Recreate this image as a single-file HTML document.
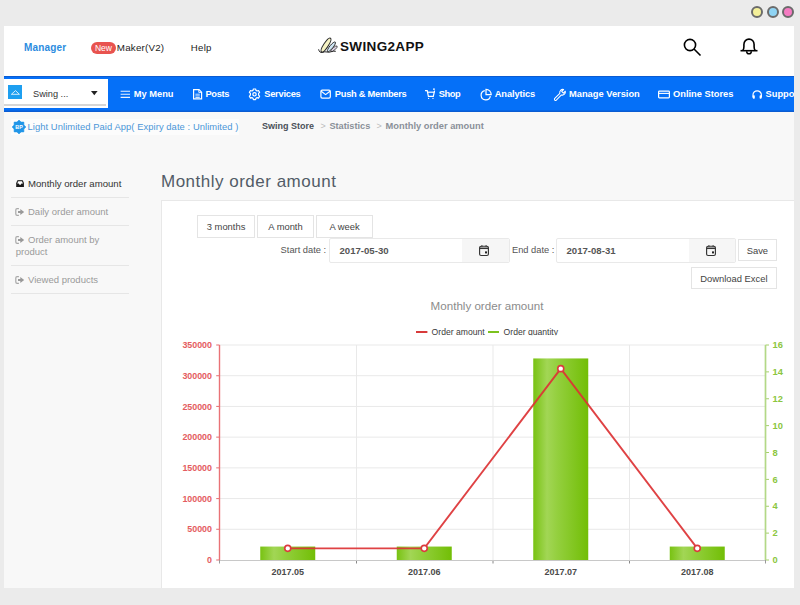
<!DOCTYPE html>
<html><head><meta charset="utf-8">
<style>
*{box-sizing:border-box;margin:0;padding:0}
html,body{width:800px;height:605px;overflow:hidden;background:#ebebeb;font-family:"Liberation Sans",sans-serif}
.a{position:absolute;white-space:nowrap;line-height:1}
.dot{position:absolute;width:12px;height:12px;border-radius:50%;border:2px solid #6b6b6b;top:5.7px}
#win{position:absolute;left:4px;top:26px;width:790px;height:562px;background:#fff;overflow:hidden}
#content{position:absolute;left:4px;top:112px;width:790px;height:476px;background:#f8f8f8}
#nav{position:absolute;left:4px;top:76.3px;width:790px;height:35.4px;background:#0570f8;overflow:hidden;box-shadow:inset 0 1px 0 #0b5cd2,inset 0 -1.5px 0 #0b5cd2}
.nt{position:absolute;top:14.2px;color:#fff;font-weight:bold;font-size:9.3px;line-height:1;white-space:nowrap}
.sep{position:absolute;left:11px;width:118px;height:1px;background:#e6e6e6}
.btn{position:absolute;background:#fff;border:1px solid #e4e4e4;font-size:9.4px;color:#444;text-align:center;line-height:22.5px}
.inp{position:absolute;background:#fff;border:1px solid #e9e9e9}
</style></head><body>
<div class="dot" style="left:751px;background:#f4f09a"></div>
<div class="dot" style="left:766.6px;background:#8fd4f4"></div>
<div class="dot" style="left:782px;background:#f57bc2"></div>
<div id="win"></div>
<div class="a" style="left:24.00px;top:43.00px;font-size:10px;color:#2b8ce0;font-weight:bold;letter-spacing:0.15px;">Manager</div>
<div class="a" style="left:91px;top:41.5px;width:25px;height:12.5px;border-radius:6.5px;background:#e8534f;color:#fff;font-size:8.5px;line-height:12.5px;text-align:center">New</div>
<div class="a" style="left:116.80px;top:43.00px;font-size:9.8px;color:#222;letter-spacing:0.2px;">Maker(V2)</div>
<div class="a" style="left:190.80px;top:43.00px;font-size:9.6px;color:#222;letter-spacing:0.3px;">Help</div>
<svg class="a" style="left:314px;top:34px" width="30" height="22" viewBox="314 34 30 22">
 <ellipse cx="326" cy="45.1" rx="8.2" ry="2.3" transform="rotate(-57 326 45.1)" fill="#f6f3c4" stroke="#2a2a2a" stroke-width="1"/>
 <ellipse cx="331.4" cy="46.8" rx="6.1" ry="1.7" transform="rotate(-51 331.4 46.8)" fill="#cfe6f6" stroke="#2a2a2a" stroke-width="0.9"/>
 <ellipse cx="334" cy="48.8" rx="4.1" ry="1.3" transform="rotate(-41 334 48.8)" fill="#ddd3e6" stroke="#3a3a3a" stroke-width="0.8"/>
 <path d="M318.6 49.3 Q319.4 53 322.2 52.4 Q325 51.4 327 52 Q329.2 52.6 331.2 51.7 Q333.5 50.9 335.8 51.3" fill="none" stroke="#2a2a2a" stroke-width="1"/>
</svg>
<div class="a" style="left:340.00px;top:40.00px;font-size:13.5px;color:#111;font-weight:bold;letter-spacing:0.35px;">SWING2APP</div>
<svg class="a" style="left:680px;top:35px" width="24" height="24" viewBox="0 0 24 24">
 <circle cx="10" cy="10" r="5.6" fill="none" stroke="#000" stroke-width="1.6"/>
 <line x1="14" y1="14" x2="20.5" y2="20.5" stroke="#000" stroke-width="1.6"/>
</svg>
<svg class="a" style="left:737px;top:35px" width="24" height="24" viewBox="0 0 24 24">
 <path d="M5.8 15.6 C6.6 14.6 6.9 13.5 6.9 11.8 V9.6 C6.9 6.3 9.2 4.1 12 4.1 C14.8 4.1 17.1 6.3 17.1 9.6 V11.8 C17.1 13.5 17.4 14.6 18.2 15.6" fill="none" stroke="#000" stroke-width="1.6"/>
 <line x1="3.5" y1="15.7" x2="20.5" y2="15.7" stroke="#000" stroke-width="1.6"/>
 <path d="M9.7 16.2 A2.3 2.6 0 0 0 14.3 16.2" fill="none" stroke="#000" stroke-width="1.5"/>
</svg>
<div id="nav">
 <div style="position:absolute;left:0;top:2.9px;width:103.5px;height:28.8px;background:#fff"></div>
 <div style="position:absolute;left:0;top:28.1px;width:101.7px;height:2.1px;background:#d6d6d6"></div>
 <div style="position:absolute;left:4px;top:9px;width:14px;height:14px;background:#1e9ff0"></div>
 <svg style="position:absolute;left:4px;top:9px" width="14" height="14" viewBox="0 0 14 14"><path d="M3.4 9.3 L7.5 5.6 L11.4 9.3 Z" fill="none" stroke="#fff" stroke-width="0.8"/></svg>
 <svg style="position:absolute;left:0;top:0" width="790" height="36" viewBox="4 76 790 36" fill="none" stroke="#fff" stroke-width="1.2">
  <path d="M120.6 91.2 H130 M120.6 94.3 H130 M120.6 97.4 H130" stroke-width="1.1" stroke="#eaf2ff"/>
  <path d="M193.6 89.6 H199 L201.6 92.2 V98.9 H193.6 Z" />
  <path d="M198.8 89.6 V92.4 H201.6" stroke-width="0.9"/>
  <path d="M195.4 94.2 H199.8 M195.4 95.9 H199.8 M195.4 97.5 H199.8" stroke-width="0.8"/>
  <g transform="translate(254.5 94.3)">
   <path d="M-1.1 -5.3 L1.1 -5.3 L1.5 -3.9 L2.6 -3.3 L4 -3.8 L5.1 -1.9 L4.1 -0.9 L4.1 0.9 L5.1 1.9 L4 3.8 L2.6 3.3 L1.5 3.9 L1.1 5.3 L-1.1 5.3 L-1.5 3.9 L-2.6 3.3 L-4 3.8 L-5.1 1.9 L-4.1 0.9 L-4.1 -0.9 L-5.1 -1.9 L-4 -3.8 L-2.6 -3.3 L-1.5 -3.9 Z" stroke-linejoin="round"/>
   <circle r="1.7"/>
  </g>
  <rect x="320.9" y="90.2" width="9.4" height="7.9" rx="1.3"/>
  <path d="M321.2 91.2 L325.6 94.6 L330 91.2"/>
  <path d="M425 90.6 H427.2 L428.4 96.3 H433.3 L434.6 90.6 M433 89.2 L434.9 89.2" />
  <path d="M427.4 92.2 H434.2"/>
  <circle cx="428.6" cy="98.4" r="0.6" fill="#fff" stroke="none"/>
  <circle cx="433" cy="98.4" r="0.6" fill="#fff" stroke="none"/>
  <path d="M484.8 90.6 A4.7 4.7 0 1 0 490.4 96.2" />
  <path d="M486 89.3 V94.6 H491.2 A5.2 5.2 0 0 0 486 89.3 Z" fill="none"/>
  <g transform="translate(560.2 94.6) rotate(45)"><path d="M-1.1 6.6 V-0.6 A3.1 3.1 0 0 1 -1.2 -6 V-3.3 H1.2 V-6 A3.1 3.1 0 0 1 1.1 -0.6 V6.6 A1.1 1.1 0 0 1 -1.1 6.6 Z" stroke-width="1.05" stroke-linejoin="round"/></g>
  <rect x="658.6" y="91.2" width="10.8" height="6.6" rx="0.8"/>
  <path d="M658.6 93.4 H669.4" stroke-width="1.1"/>
  <path d="M753 97.5 V95 A4.2 4.2 0 0 1 761.4 95 V97.5" />
  <rect x="752.8" y="95.2" width="2" height="3.6" rx="0.8" fill="#fff" stroke="none"/>
  <rect x="759.6" y="95.2" width="2" height="3.6" rx="0.8" fill="#fff" stroke="none"/>
 </svg>
 <div class="nt" style="left:129.75px;letter-spacing:0px">My Menu</div>
 <div class="nt" style="left:201.50px;letter-spacing:-0.35px">Posts</div>
 <div class="nt" style="left:260.25px;letter-spacing:-0.25px">Services</div>
 <div class="nt" style="left:330.80px;letter-spacing:-0.27px">Push &amp; Members</div>
 <div class="nt" style="left:434.80px;letter-spacing:-0.45px">Shop</div>
 <div class="nt" style="left:490.75px;letter-spacing:-0.1px">Analytics</div>
 <div class="nt" style="left:565.00px;letter-spacing:0px">Manage Version</div>
 <div class="nt" style="left:669.00px;letter-spacing:0px">Online Stores</div>
 <div class="nt" style="left:761.50px;letter-spacing:0px">Support</div>
 <div class="nt" style="left:29px;top:14px;color:#333;font-weight:normal;font-size:9.2px">Swing ...</div>
 <svg style="position:absolute;left:87.2px;top:15px" width="7" height="5" viewBox="0 0 7 5"><path d="M0 0 H6.6 L3.3 4.3 Z" fill="#222"/></svg>
</div>
<div id="content"></div>
<div class="a" style="left:11px;top:118.5px;width:228px;height:16px;background:#fcfcfc"></div>
<svg class="a" style="left:11px;top:119px" width="16" height="16" viewBox="0 0 16 16"><path d="M8.00 1.10 L10.03 3.10 L12.88 3.12 L12.90 5.97 L14.90 8.00 L12.90 10.03 L12.88 12.88 L10.03 12.90 L8.00 14.90 L5.97 12.90 L3.12 12.88 L3.10 10.03 L1.10 8.00 L3.10 5.97 L3.12 3.12 L5.97 3.10 Z" fill="#2196e8" stroke="#2196e8" stroke-width="0.6" stroke-linejoin="round"/><text x="8" y="10.2" font-family="Liberation Sans" font-size="5.4" font-weight="bold" fill="#fff" text-anchor="middle">BP</text></svg>
<div class="a" style="left:27.50px;top:122.00px;font-size:9.4px;color:#4b96d8;letter-spacing:0.07px;">Light Unlimited Paid App( Expiry date : Unlimited )</div>
<div class="a" style="left:262.00px;top:122.00px;font-size:9px;color:#4a5058;font-weight:bold;">Swing Store</div>
<div class="a" style="left:320.50px;top:122.00px;font-size:9px;color:#bbbbbb;">&gt;</div>
<div class="a" style="left:329.40px;top:122.00px;font-size:9.2px;color:#8a9099;font-weight:bold;">Statistics</div>
<div class="a" style="left:376.50px;top:122.00px;font-size:9px;color:#bbbbbb;">&gt;</div>
<div class="a" style="left:385.60px;top:122.00px;font-size:9.3px;color:#8a9099;font-weight:bold;">Monthly order amount</div>
<svg class="a" style="left:15.6px;top:180px" width="8.2" height="7.2" viewBox="0 0 8.2 7.2"><path d="M0.3 6.9 V3.3 L1.7 0.3 H6.5 L7.9 3.3 V6.9 Z" fill="#1a1a1a" stroke="#1a1a1a" stroke-width="0.4" stroke-linejoin="round"/><path d="M1.2 3.6 L2.3 1.2 H5.9 L7 3.6 H5.5 L4.7 4.8 H3.5 L2.7 3.6 Z" fill="#fff"/></svg>
<div class="a" style="left:28.00px;top:179.00px;font-size:9.6px;color:#333;">Monthly order amount</div>
<div class="sep" style="top:197px"></div>
<svg class="a" style="left:15px;top:207.5px" width="10" height="8" viewBox="0 0 10 8"><path d="M3.9 0.7 H2.1 Q0.8 0.7 0.8 2 V6 Q0.8 7.3 2.1 7.3 H3.9" fill="none" stroke="#a8a8a8" stroke-width="1.2"/><path d="M3 3 H5.3 V1 L9.2 4 L5.3 7 V5 H3 Z" fill="#999"/></svg>
<div class="a" style="left:28.00px;top:207.00px;font-size:9.5px;color:#9a9a9a;">Daily order amount</div>
<div class="sep" style="top:225px"></div>
<svg class="a" style="left:15px;top:235.5px" width="10" height="8" viewBox="0 0 10 8"><path d="M3.9 0.7 H2.1 Q0.8 0.7 0.8 2 V6 Q0.8 7.3 2.1 7.3 H3.9" fill="none" stroke="#a8a8a8" stroke-width="1.2"/><path d="M3 3 H5.3 V1 L9.2 4 L5.3 7 V5 H3 Z" fill="#999"/></svg>
<div class="a" style="left:28.00px;top:235.00px;font-size:9.5px;color:#9a9a9a;">Order amount by</div>
<div class="a" style="left:15.70px;top:247.00px;font-size:9.5px;color:#9a9a9a;">product</div>
<div class="sep" style="top:265px"></div>
<svg class="a" style="left:15px;top:275.5px" width="10" height="8" viewBox="0 0 10 8"><path d="M3.9 0.7 H2.1 Q0.8 0.7 0.8 2 V6 Q0.8 7.3 2.1 7.3 H3.9" fill="none" stroke="#a8a8a8" stroke-width="1.2"/><path d="M3 3 H5.3 V1 L9.2 4 L5.3 7 V5 H3 Z" fill="#999"/></svg>
<div class="a" style="left:28.00px;top:275.00px;font-size:9.5px;color:#9a9a9a;">Viewed products</div>
<div class="sep" style="top:293px"></div>
<div class="a" style="left:161.00px;top:173.00px;font-size:17px;color:#525c67;letter-spacing:0.5px;">Monthly order amount</div>
<div class="a" style="left:161px;top:200px;width:633px;height:388px;background:#fff;border:1px solid #e8e8e8;border-right:none;border-bottom:none"></div>
<div class="btn" style="left:197.3px;top:215px;width:57.5px;height:22.5px">3 months</div>
<div class="btn" style="left:257.0px;top:215px;width:57.0px;height:22.5px">A month</div>
<div class="btn" style="left:316.0px;top:215px;width:57.0px;height:22.5px">A week</div>
<div class="a" style="left:280.60px;top:246.00px;font-size:9.3px;color:#555;">Start date :</div>
<div class="a" style="left:512.00px;top:246.00px;font-size:9.3px;color:#555;">End date :</div>
<div class="inp" style="left:329px;top:238px;width:180.5px;height:24.6px;border-radius:2px"></div>
<div class="a" style="left:461.5px;top:239px;width:47.0px;height:22.6px;background:#f6f6f6;border-radius:0 2px 2px 0"></div>
<svg class="a" style="left:478.2px;top:244px" width="12" height="13" viewBox="0 0 12 13"><rect x="1.6" y="2.2" width="8.8" height="9.3" rx="1.5" fill="none" stroke="#333" stroke-width="1.15"/><path d="M1.6 4.3 H10.4" stroke="#333" stroke-width="1.5"/><rect x="7" y="7.4" width="2" height="2" fill="#222"/><path d="M3.9 1.2 V2.8 M8.1 1.2 V2.8" stroke="#333" stroke-width="1.1"/></svg>
<div class="a" style="left:339.50px;top:246.00px;font-size:9.6px;color:#555;font-weight:bold;">2017-05-30</div>
<div class="inp" style="left:556px;top:238px;width:180.0px;height:24.6px;border-radius:2px"></div>
<div class="a" style="left:688.8px;top:239px;width:46.2px;height:22.6px;background:#f6f6f6;border-radius:0 2px 2px 0"></div>
<svg class="a" style="left:705.1px;top:244px" width="12" height="13" viewBox="0 0 12 13"><rect x="1.6" y="2.2" width="8.8" height="9.3" rx="1.5" fill="none" stroke="#333" stroke-width="1.15"/><path d="M1.6 4.3 H10.4" stroke="#333" stroke-width="1.5"/><rect x="7" y="7.4" width="2" height="2" fill="#222"/><path d="M3.9 1.2 V2.8 M8.1 1.2 V2.8" stroke="#333" stroke-width="1.1"/></svg>
<div class="a" style="left:566.50px;top:246.00px;font-size:9.6px;color:#555;font-weight:bold;">2017-08-31</div>
<div class="btn" style="left:738.2px;top:239px;width:38.4px;height:22.2px;line-height:21.5px">Save</div>
<div class="btn" style="left:691.2px;top:266.5px;width:85.4px;height:22.2px;line-height:21px">Download Excel</div>
<svg class="a" style="left:0;top:0" width="794" height="588" viewBox="0 0 794 588">
 <defs><linearGradient id="bg" x1="0" x2="1" y1="0" y2="0"><stop offset="0" stop-color="#78c212"/><stop offset="0.25" stop-color="#a2d655"/><stop offset="0.45" stop-color="#93cf3d"/><stop offset="1" stop-color="#72be06"/></linearGradient>
  <clipPath id="lg"><rect x="400" y="320" width="200" height="15.2"/></clipPath></defs>
 <text x="487" y="310" font-family="Liberation Sans" font-size="11.6" fill="#8c8c8c" text-anchor="middle">Monthly order amount</text>
 <g clip-path="url(#lg)">
  <path d="M416 332 H427.4" stroke="#d83a3a" stroke-width="2"/>
  <text x="431.6" y="335" font-family="Liberation Sans" font-size="8.6" fill="#3a3a3a">Order amount</text>
  <path d="M488 332 H499" stroke="#7cc21e" stroke-width="2"/>
  <text x="503.6" y="335" font-family="Liberation Sans" font-size="8.6" fill="#3a3a3a">Order quantity</text>
 </g>
 <path d="M219.5 345.00 H765.5" stroke="#e9e9e9" stroke-width="1"/>
 <path d="M216.2 345.00 H219.5" stroke="#e87a7e" stroke-width="1.1"/>
 <text x="212" y="348.20" font-family="Liberation Sans" font-size="8.9" font-weight="bold" fill="#e45c61" text-anchor="end">350000</text>
 <path d="M219.5 375.71 H765.5" stroke="#e9e9e9" stroke-width="1"/>
 <path d="M216.2 375.71 H219.5" stroke="#e87a7e" stroke-width="1.1"/>
 <text x="212" y="378.91" font-family="Liberation Sans" font-size="8.9" font-weight="bold" fill="#e45c61" text-anchor="end">300000</text>
 <path d="M219.5 406.43 H765.5" stroke="#e9e9e9" stroke-width="1"/>
 <path d="M216.2 406.43 H219.5" stroke="#e87a7e" stroke-width="1.1"/>
 <text x="212" y="409.63" font-family="Liberation Sans" font-size="8.9" font-weight="bold" fill="#e45c61" text-anchor="end">250000</text>
 <path d="M219.5 437.14 H765.5" stroke="#e9e9e9" stroke-width="1"/>
 <path d="M216.2 437.14 H219.5" stroke="#e87a7e" stroke-width="1.1"/>
 <text x="212" y="440.34" font-family="Liberation Sans" font-size="8.9" font-weight="bold" fill="#e45c61" text-anchor="end">200000</text>
 <path d="M219.5 467.86 H765.5" stroke="#e9e9e9" stroke-width="1"/>
 <path d="M216.2 467.86 H219.5" stroke="#e87a7e" stroke-width="1.1"/>
 <text x="212" y="471.06" font-family="Liberation Sans" font-size="8.9" font-weight="bold" fill="#e45c61" text-anchor="end">150000</text>
 <path d="M219.5 498.57 H765.5" stroke="#e9e9e9" stroke-width="1"/>
 <path d="M216.2 498.57 H219.5" stroke="#e87a7e" stroke-width="1.1"/>
 <text x="212" y="501.77" font-family="Liberation Sans" font-size="8.9" font-weight="bold" fill="#e45c61" text-anchor="end">100000</text>
 <path d="M219.5 529.29 H765.5" stroke="#e9e9e9" stroke-width="1"/>
 <path d="M216.2 529.29 H219.5" stroke="#e87a7e" stroke-width="1.1"/>
 <text x="212" y="532.49" font-family="Liberation Sans" font-size="8.9" font-weight="bold" fill="#e45c61" text-anchor="end">50000</text>
 <path d="M216.2 560.00 H219.5" stroke="#e87a7e" stroke-width="1.1"/>
 <text x="212" y="563.20" font-family="Liberation Sans" font-size="8.9" font-weight="bold" fill="#e45c61" text-anchor="end">0</text>
 <path d="M356.50 345.0 V560.0" stroke="#e9e9e9" stroke-width="1"/>
 <path d="M356.50 560.0 V563.5" stroke="#888" stroke-width="1"/>
 <path d="M493.00 345.0 V560.0" stroke="#e9e9e9" stroke-width="1"/>
 <path d="M493.00 560.0 V563.5" stroke="#888" stroke-width="1"/>
 <path d="M629.50 345.0 V560.0" stroke="#e9e9e9" stroke-width="1"/>
 <path d="M629.50 560.0 V563.5" stroke="#888" stroke-width="1"/>
 <path d="M765.5 560.00 H769" stroke="#a5d06a" stroke-width="1"/>
 <text x="772.5" y="563.20" font-family="Liberation Sans" font-size="9.3" font-weight="bold" fill="#8cc640">0</text>
 <path d="M765.5 533.12 H769" stroke="#a5d06a" stroke-width="1"/>
 <text x="772.5" y="536.33" font-family="Liberation Sans" font-size="9.3" font-weight="bold" fill="#8cc640">2</text>
 <path d="M765.5 506.25 H769" stroke="#a5d06a" stroke-width="1"/>
 <text x="772.5" y="509.45" font-family="Liberation Sans" font-size="9.3" font-weight="bold" fill="#8cc640">4</text>
 <path d="M765.5 479.38 H769" stroke="#a5d06a" stroke-width="1"/>
 <text x="772.5" y="482.57" font-family="Liberation Sans" font-size="9.3" font-weight="bold" fill="#8cc640">6</text>
 <path d="M765.5 452.50 H769" stroke="#a5d06a" stroke-width="1"/>
 <text x="772.5" y="455.70" font-family="Liberation Sans" font-size="9.3" font-weight="bold" fill="#8cc640">8</text>
 <path d="M765.5 425.62 H769" stroke="#a5d06a" stroke-width="1"/>
 <text x="772.5" y="428.82" font-family="Liberation Sans" font-size="9.3" font-weight="bold" fill="#8cc640">10</text>
 <path d="M765.5 398.75 H769" stroke="#a5d06a" stroke-width="1"/>
 <text x="772.5" y="401.95" font-family="Liberation Sans" font-size="9.3" font-weight="bold" fill="#8cc640">12</text>
 <path d="M765.5 371.88 H769" stroke="#a5d06a" stroke-width="1"/>
 <text x="772.5" y="375.07" font-family="Liberation Sans" font-size="9.3" font-weight="bold" fill="#8cc640">14</text>
 <path d="M765.5 345.00 H769" stroke="#a5d06a" stroke-width="1"/>
 <text x="772.5" y="348.20" font-family="Liberation Sans" font-size="9.3" font-weight="bold" fill="#8cc640">16</text>
 <rect x="260.25" y="546.56" width="55" height="13.44" fill="url(#bg)"/>
 <rect x="396.75" y="546.56" width="55" height="13.44" fill="url(#bg)"/>
 <rect x="533.25" y="358.44" width="55" height="201.56" fill="url(#bg)"/>
 <rect x="669.75" y="546.56" width="55" height="13.44" fill="url(#bg)"/>
 <path d="M219.5 560.5 H765.5" stroke="#c8c8c8" stroke-width="1.2"/>
 <path d="M219.5 345.0 V560.0" stroke="#e97276" stroke-width="1.4"/>
 <path d="M219.5 560.0 V563.5" stroke="#999" stroke-width="1"/>
 <path d="M765.5 345.0 V560.0" stroke="#b3d886" stroke-width="1.7"/>
 <path d="M765.5 560.0 V563.5" stroke="#999" stroke-width="1"/>
 <polyline points="287.75,548.33 424.25,548.33 560.75,368.65 697.25,548.33" fill="none" stroke="rgba(220,50,52,0.92)" stroke-width="1.9"/>
 <circle cx="287.75" cy="548.33" r="3" fill="#fff" stroke="#dc3a3e" stroke-width="1.6"/>
 <circle cx="424.25" cy="548.33" r="3" fill="#fff" stroke="#dc3a3e" stroke-width="1.6"/>
 <circle cx="560.75" cy="368.65" r="3" fill="#fff" stroke="#dc3a3e" stroke-width="1.6"/>
 <circle cx="697.25" cy="548.33" r="3" fill="#fff" stroke="#dc3a3e" stroke-width="1.6"/>
 <text x="287.75" y="575.4" font-family="Liberation Sans" font-size="9" font-weight="bold" fill="#4a4a4a" text-anchor="middle">2017.05</text>
 <text x="424.25" y="575.4" font-family="Liberation Sans" font-size="9" font-weight="bold" fill="#4a4a4a" text-anchor="middle">2017.06</text>
 <text x="560.75" y="575.4" font-family="Liberation Sans" font-size="9" font-weight="bold" fill="#4a4a4a" text-anchor="middle">2017.07</text>
 <text x="697.25" y="575.4" font-family="Liberation Sans" font-size="9" font-weight="bold" fill="#4a4a4a" text-anchor="middle">2017.08</text>
</svg>
</body></html>
